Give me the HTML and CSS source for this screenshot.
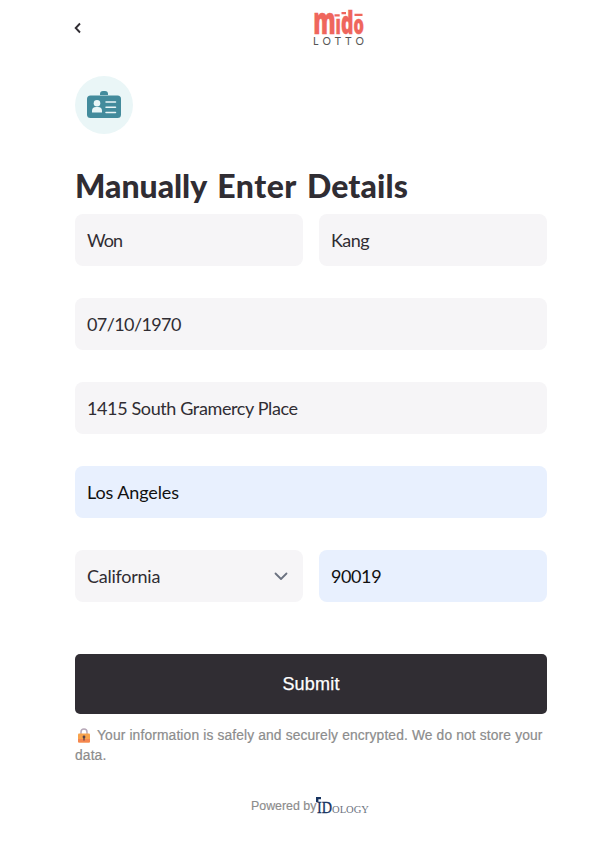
FILE: index.html
```html
<!DOCTYPE html>
<html lang="en">
<head>
<meta charset="utf-8">
<title>Manually Enter Details</title>
<link rel="stylesheet" href="styles.css">
</head>
<body>
<main class="page">
  <header class="header">
    <svg class="back" viewBox="0 0 8 12" aria-label="Back"><path d="M6 1.5 1.7 6 6 10.5"/></svg>
    <svg class="logo" viewBox="0 0 54 40" aria-label="Mido Lotto">
      <g class="logo-name">
        <text x="1.2" y="28.3" textLength="50.6" lengthAdjust="spacingAndGlyphs"><tspan font-size="37">m</tspan><tspan font-size="27">ı</tspan><tspan font-size="32">d</tspan><tspan font-size="27">o</tspan></text>
        <path stroke="none" d="M22.5 8.2h5.2v2.3h-5.2zM29.5 6h4.5v2.2h-4.5zM42.5 7.8h8v2.3h-8z"/>
      </g>
      <text class="logo-sub" x="1" y="38.5" textLength="51">LOTTO</text>
    </svg>
  </header>
  <div class="badge">
    <svg viewBox="0 0 34 27" aria-hidden="true">
      <path fill="#438b9c" d="M13 4V3a3 3 0 0 1 3-3h2a3 3 0 0 1 3 3v1z"/>
      <rect fill="#438b9c" y="4.5" width="34" height="22.5" rx="3.5"/>
      <g fill="#eaf6f7"><circle cx="10" cy="12.3" r="3.3"/><path d="M5 21.5V20a4 4 0 0 1 4-4h2a4 4 0 0 1 4 4v1.5z"/></g>
      <path stroke="#eaf6f7" stroke-width="1.5" stroke-linecap="round" d="M19 11H28.5M19 16.3H28.5M19 21.5H28.5"/>
    </svg>
  </div>
  <h1><span class="manually">Manually</span> <span class="enter">Enter</span> <span class="details">Details</span></h1>
  <form class="form">
    <div class="field won">Won</div>
    <div class="field kang">Kang</div>
    <div class="field wide date">07/10/1970</div>
    <div class="field wide street">1415 South Gramercy Place</div>
    <div class="field wide filled city">Los Angeles</div>
    <div class="field select">California
      <svg class="chevron" viewBox="0 0 14 9"><path d="m1.5 1.5 5.5 5.5 5.5-5.5"/></svg>
    </div>
    <div class="field filled zip">90019</div>
  </form>
  <button class="submit" type="button">Submit</button>
  <p class="note"><svg class="lock" viewBox="0 0 12 15"><path d="M3 7V4a3 3 0 0 1 6 0v3" fill="none" stroke="#b7a8b8" stroke-width="1.5"/><rect y="5.5" width="12" height="9" rx="1" fill="#f7a34c"/><path d="M0 11h12v2.5a1 1 0 0 1-1 1H1a1 1 0 0 1-1-1z" fill="#f58650"/><circle cx="6" cy="9" r="1.4" fill="#54404b"/><path d="M5.4 9h1.2v3.5H5.4z" fill="#54404b"/></svg>Your information is safely and securely encrypted. We do not store your data.</p>
  <footer class="footer">
    <span>Powered by</span>
    <svg class="idology" viewBox="0 0 55 18" aria-label="IDology">
      <path d="M0 0h5v2.2H2.4v3H0z" fill="#16335f"/>
      <text x="1" y="16" textLength="15" lengthAdjust="spacingAndGlyphs" font-size="16" fill="#16335f" stroke="#16335f" stroke-width=".3">ID</text>
      <text x="16" y="16" textLength="37" lengthAdjust="spacingAndGlyphs" font-size="10.5" fill="#6c7280">OLOGY</text>
    </svg>
  </footer>
</main>
</body>
</html>
```
FILE: styles.css
```css
* { box-sizing: border-box; }
body { margin: 0; background: #fff; color: #302d33; font-family: "Liberation Sans", Arial, sans-serif; }
.page { width: 472px; margin-left: 75px; display: flex; flex-direction: column; }
.header { height: 76px; display: grid; grid-template-columns: 237px 54px 1fr; align-items: start; }
.back { width: 8px; height: 12px; margin-top: 22px; margin-left: -1px; fill: none; stroke: #302d33; stroke-width: 1.9; }
.logo { width: 54px; height: 40px; margin-top: 6px; overflow: visible; }
.logo-name { fill: #ef665c; stroke: #ef665c; stroke-width: .5; font-family: "Open Sans", sans-serif; font-weight: 800; }
.logo-sub { fill: #555; font-family: Lato, sans-serif; font-size: 10.5px; }
.badge { width: 58px; height: 58px; border-radius: 50%; background: #eaf6f7; display: flex; align-items: center; justify-content: center; }
.badge svg { width: 34px; height: 27px; margin: 0 1px 1px 0; }
h1 { display: flex; gap: 10px; margin: 31px 0 0; height: 49px; font: 900 32px/41px Lato, sans-serif; white-space: nowrap; }
.manually { letter-spacing: -.02px; }
.enter { letter-spacing: .5px; }
.details { letter-spacing: .15px; }
.form { display: grid; grid-template-columns: 228px 228px; gap: 32px 16px; }
.field { height: 52px; padding: 0 12px 1px; border-radius: 8px; background: #f6f5f7; display: flex; align-items: center; font: 400 18px/26px Lato, sans-serif; white-space: nowrap; }
.wide { grid-column: span 2; }
.filled { background: #e8f0fe; color: #111; }
.won { letter-spacing: -.9px; }
.kang { letter-spacing: -.5px; }
.date { letter-spacing: -.6px; }
.street { letter-spacing: -.38px; }
.city { letter-spacing: -.1px; }
.zip { letter-spacing: -.4px; }
.select { justify-content: space-between; letter-spacing: -.25px; }
.chevron { width: 14px; height: 9px; margin: 2px 3px 0 0; fill: none; stroke: #6b7280; stroke-width: 1.8; stroke-linecap: round; stroke-linejoin: round; }
.submit { margin: 52px 0 0; height: 60px; border: 0; border-radius: 5px; background: #302d33; color: #fff; font: 18px "Liberation Sans", Arial, sans-serif; letter-spacing: .2px; -webkit-text-stroke: .25px #fff; }
.note { margin: 12px -8px 0 0; color: #8c8c8c; font-size: 13.8px; line-height: 20px; letter-spacing: .14px; -webkit-text-stroke: .2px #8c8c8c; }
.lock { width: 12px; height: 15px; margin: 0 7px 0 3px; vertical-align: -3px; }
.footer { margin-top: 31px; margin-left: 176px; display: flex; height: 20px; color: #8c8c8c; font-size: 12.4px; line-height: 18px; white-space: nowrap; -webkit-text-stroke: .15px #8c8c8c; }
.idology { width: 55px; height: 18px; flex: none; font-family: "Liberation Serif", serif; -webkit-text-stroke: 0; }
```
